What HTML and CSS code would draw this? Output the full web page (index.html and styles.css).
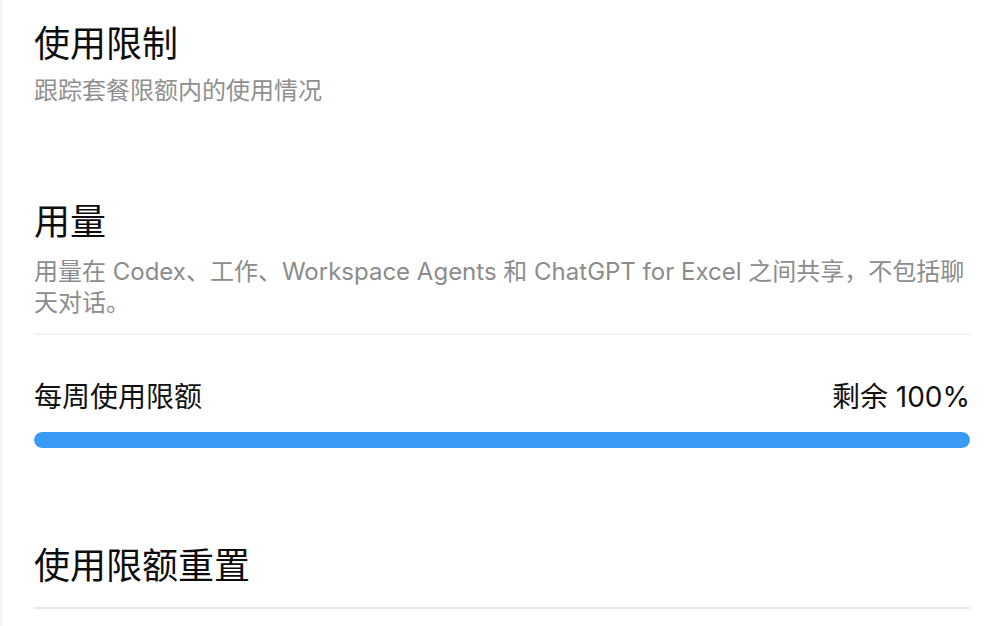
FILE: index.html
```html
<!DOCTYPE html>
<html lang="zh-CN">
<head>
  <meta charset="UTF-8" />
  <meta name="viewport" content="width=device-width, initial-scale=1.0"/>
  <title>使用限制</title>
  <link rel="stylesheet" href="styles.css">
</head>
<body>
  <div class="page">
    <div class="page-head">
      <h1 class="title">使用限制</h1>
      <p class="subtitle">跟踪套餐限额内的使用情况</p>
    </div>

    <section class="section usage">
      <h2 class="section-title">用量</h2>
      <p class="section-desc">用量在 Codex、工作、Workspace Agents 和 ChatGPT for Excel 之间共享，不包括聊天对话。</p>
      <div class="divider"></div>

      <div class="limit">
        <div class="limit-row">
          <span>每周使用限额</span>
          <span>剩余 100%</span>
        </div>
        <div class="bar">
          <div class="bar-fill" style="width: 100%"></div>
        </div>
      </div>
    </section>

    <section class="section reset">
      <h2 class="section-title">使用限额重置</h2>
      <div class="divider strong"></div>
    </section>
  </div>
</body>
</html>
```

FILE: styles.css
```css
* {
  box-sizing: border-box;
  font-family: "Inter", "Noto Sans CJK SC", sans-serif;
}

body {
  margin: 0;
  background: #ffffff;
  color: #0d0d0d;
}

.page {
  min-height: 626px;
  padding: 22px 24px 0 32px;
  border-left: 2px solid #f4f4f4;
}

h1, h2, p {
  margin: 0;
  font-weight: 400;
}

.title {
  font-size: 36px;
  line-height: 44px;
}

.subtitle {
  margin-top: 9px;
  font-size: 24px;
  line-height: 32px;
  color: #8f8f8f;
}

.section-title {
  font-size: 36px;
  line-height: 44px;
}

.usage {
  margin-top: 93px;
}

.section-desc {
  margin-top: 12px;
  font-size: 24px;
  line-height: 31px;
  color: #8c8c8c;
}

.divider {
  height: 2px;
  background: #f3f3f3;
  margin-top: 15px;
}

.divider.strong {
  background: #e9e9e9;
  margin-top: 19px;
}

.limit {
  margin-top: 44px;
}

.limit-row {
  display: flex;
  justify-content: space-between;
  font-size: 28px;
  line-height: 36px;
  color: #111111;
}

.bar {
  margin-top: 17px;
  height: 16px;
  border-radius: 8px;
  background: #e6eef8;
  overflow: hidden;
}

.bar-fill {
  height: 100%;
  background: #3a9bf7;
  border-radius: 8px;
}

.reset {
  margin-top: 96px;
}
```
